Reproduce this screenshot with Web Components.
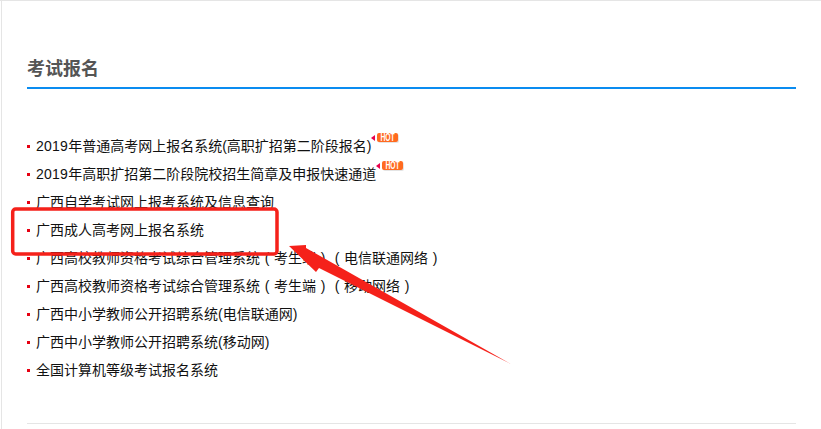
<!DOCTYPE html>
<html><head><meta charset="utf-8">
<style>html,body{margin:0;padding:0;background:#fff}body{width:821px;height:429px;overflow:hidden}</style>
</head><body>
<exam-panel>
  <exam-item hot><span class="d">2019</span>年普通高考网上报名系统(高职扩招第二阶段报名)</exam-item>
  <exam-item hot><span class="d">2019</span>年高职扩招第二阶段院校招生简章及申报快速通道</exam-item>
  <exam-item>广西自学考试网上报考系统及信息查询</exam-item>
  <exam-item>广西成人高考网上报名系统</exam-item>
  <exam-item>广西高校教师资格考试综合管理系统<b>(</b>考生端<b>)</b><b>(</b>电信联通网络<b>)</b></exam-item>
  <exam-item>广西高校教师资格考试综合管理系统<b>(</b>考生端<b>)</b><b>(</b>移动网络<b>)</b></exam-item>
  <exam-item>广西中小学教师公开招聘系统(电信联通网)</exam-item>
  <exam-item>广西中小学教师公开招聘系统(移动网)</exam-item>
  <exam-item>全国计算机等级考试报名系统</exam-item>
</exam-panel>
<script>
class ExamItem extends HTMLElement{
  constructor(){super();const s=this.attachShadow({mode:'open'});
  s.innerHTML=`<style>
  :host{display:flex;align-items:center;height:28px;color:#111;font:14px/28px "Liberation Sans","Noto Sans CJK SC",sans-serif;white-space:nowrap}
  .dot{width:3px;height:3px;background:#e60012;margin-right:6px;flex:none}
  .txt{display:block}
  ::slotted(b){display:inline-block;width:14px;text-align:center;font-weight:400}
  ::slotted(.d){letter-spacing:.25px}
  .hot{align-self:flex-start;margin:1px 0 0 0;display:flex;align-items:center;height:9px}
  .tri{width:0;height:0;border:3.5px solid transparent;border-right:4px solid #e8004c;border-left:0}
  .lab{margin-left:2px;width:21px;height:9px;background:#ff6a1f;border-radius:2px;box-shadow:1px 1px 0 #e4e4e4;color:#fff;font:bold 10px/9px "Liberation Sans",sans-serif;text-align:center;overflow:hidden}
  .lab i{display:inline-block;font-style:normal;transform:scaleX(.68)}
  </style><span class="dot"></span><span class="txt"><slot></slot></span>${this.hasAttribute('hot')?'<span class="hot"><span class="tri"></span><span class="lab"><i>HOT</i></span></span>':''}`;}
}
customElements.define('exam-item',ExamItem);
class ExamPanel extends HTMLElement{
  constructor(){super();const s=this.attachShadow({mode:'open'});
  s.innerHTML=`<style>
  :host{display:block;box-sizing:border-box;width:821px;height:429px;position:relative;background:#fff;padding:1px 0 0 2px}
  .top{position:absolute;left:0;right:0;top:0;height:1px;background:#e5e5e5}
  .left{position:absolute;left:1px;top:0;bottom:0;width:1px;background:#e5e5e5}
  .in{margin-left:25px;width:769px;display:flex;flex-direction:column}
  h2{margin:0;height:88px;box-sizing:border-box;padding-top:53px;border-bottom:2px solid #0a8cf0;color:#555;font:bold 18px/30px "Liberation Sans","Noto Sans CJK SC",sans-serif}
  .list{margin-top:43px;display:flex;flex-direction:column}
  .foot{margin-top:39px;height:1px;background:#e5e5e5}
  svg{position:absolute;left:0;top:0}
  </style>
  <div class="top"></div><div class="left"></div>
  <div class="in"><h2>考试报名</h2><div class="list"><slot></slot></div><div class="foot"></div></div>
  <svg width="821" height="429"><rect x="12.7" y="209" width="264.3" height="45" rx="3" fill="none" stroke="#f5211a" stroke-width="3.5"/><polygon points="289,246 306,245 306,248 511,364 319,268 316,272" fill="#f5211a"/></svg>`;}
}
customElements.define('exam-panel',ExamPanel);
</script>
</body></html>
